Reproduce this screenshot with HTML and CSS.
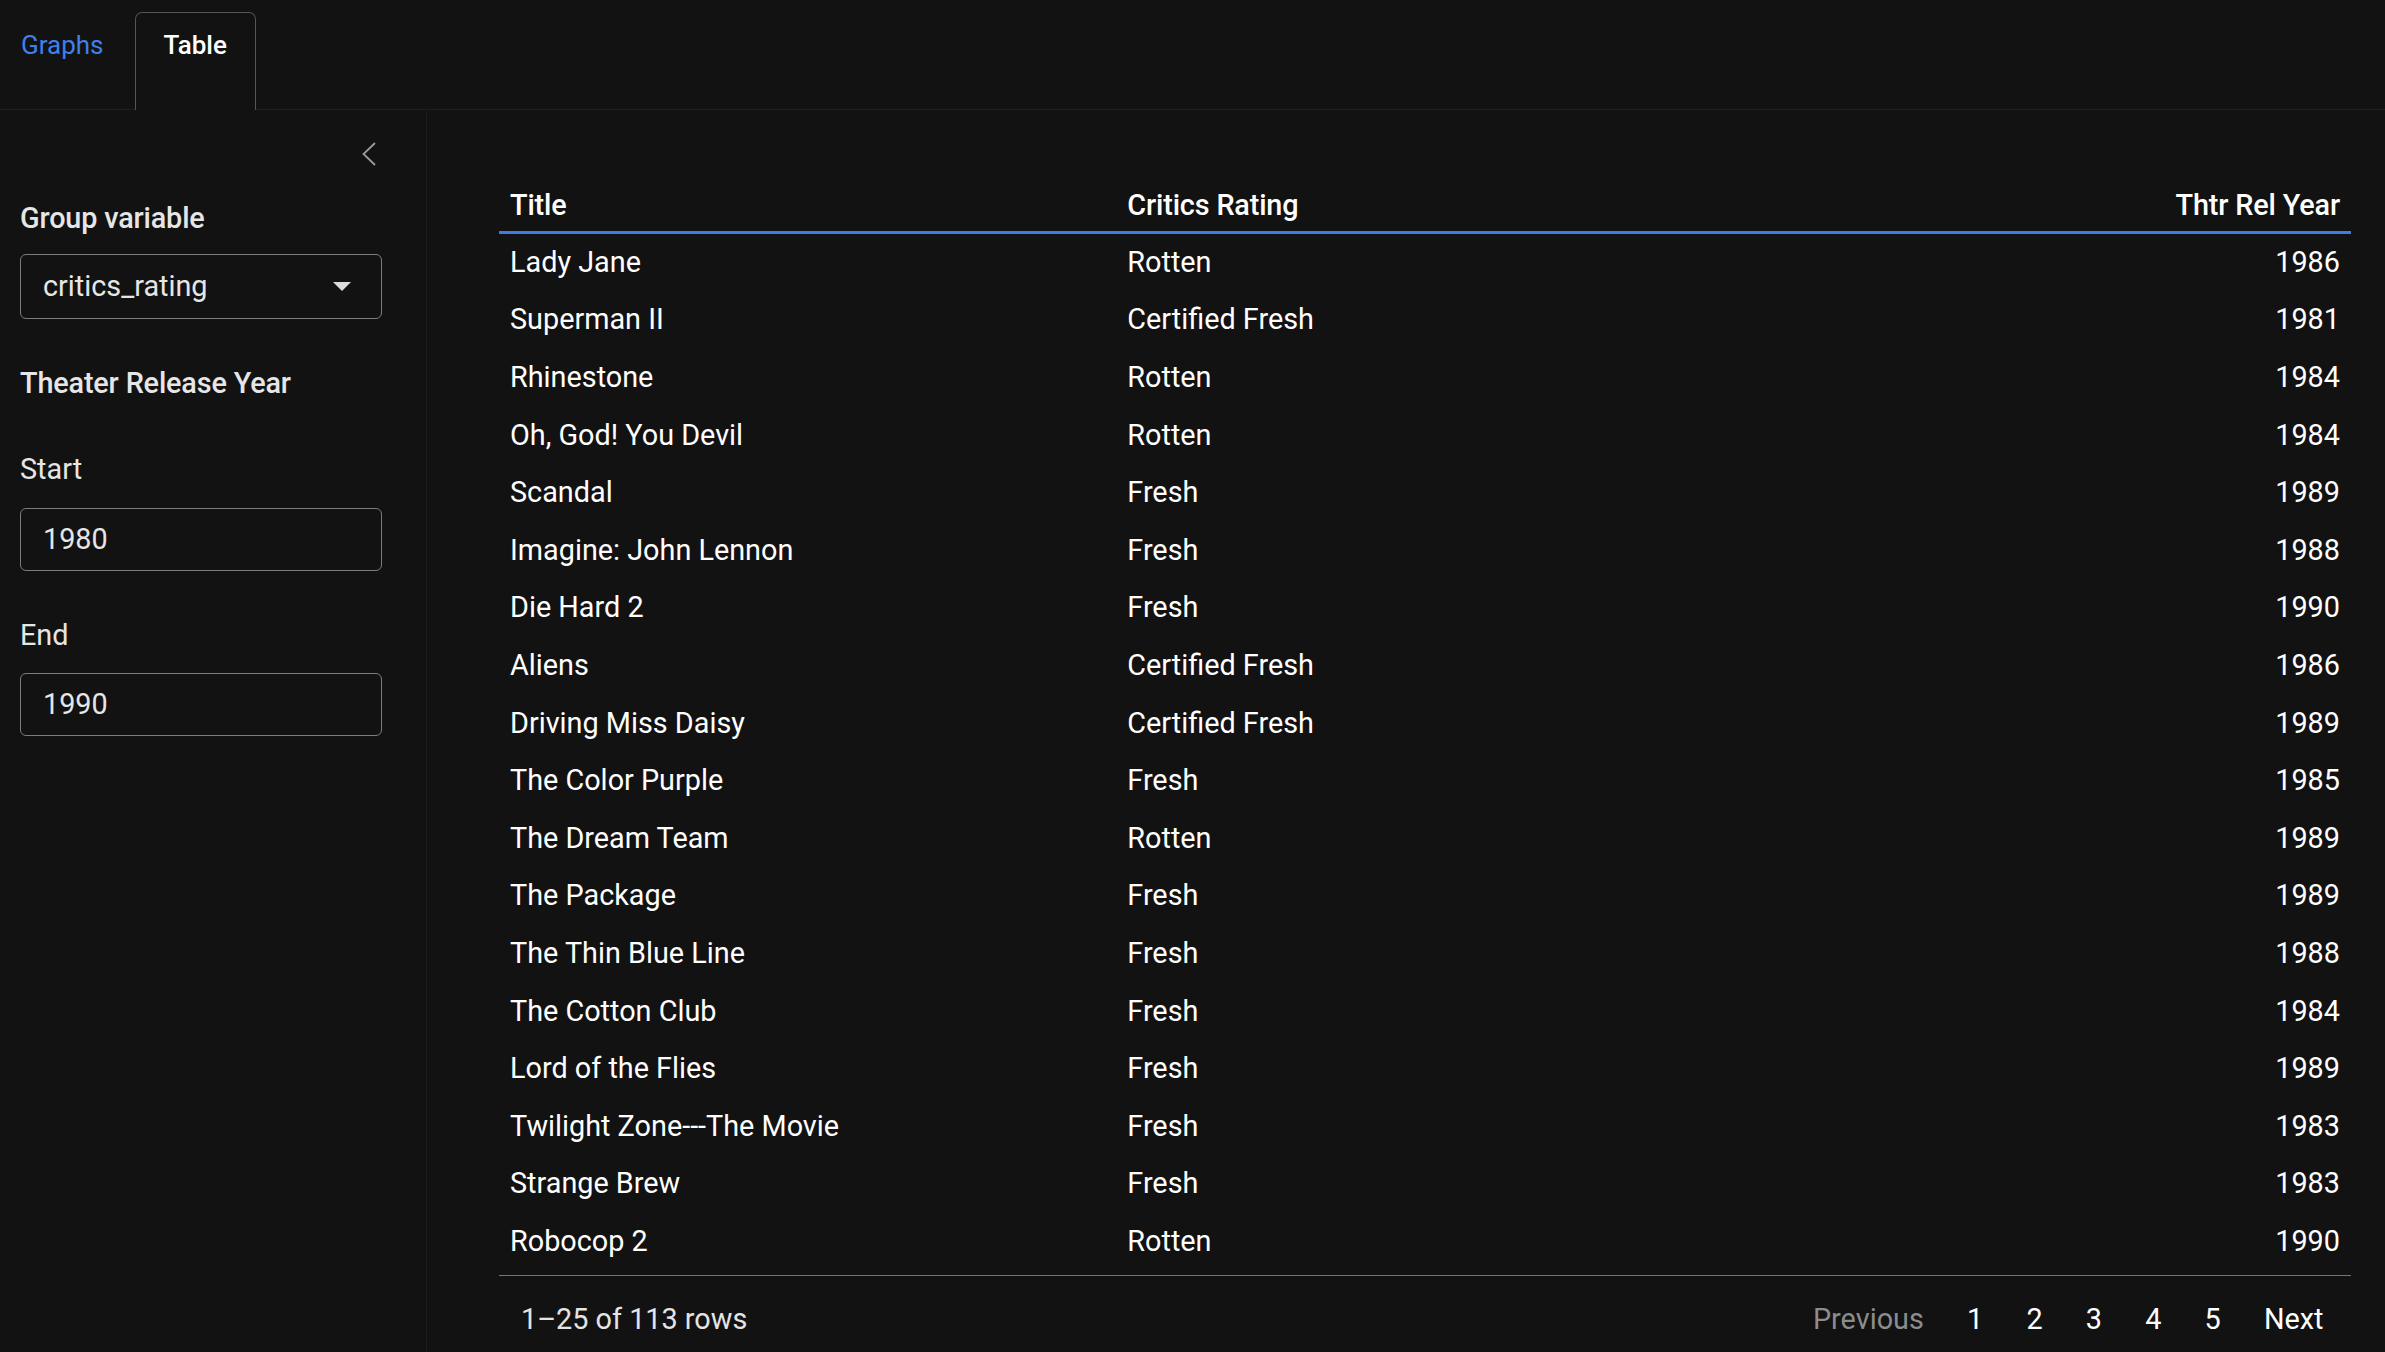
FILE: index.html
```html
<!DOCTYPE html>
<html lang="en">
<head>
<meta charset="utf-8">
<title>Movies</title>
<link rel="stylesheet" href="styles.css">
</head>
<body>
<div class="app">
  <nav class="tabs">
    <a class="tab tab-link">Graphs</a>
    <a class="tab tab-active">Table</a>
  </nav>
  <div class="layout">
    <aside class="sidebar">
      <div class="toggle-row">
        <svg class="chevron" width="14" height="24" viewBox="0 0 14 24"><path d="M13 1 L1.5 12 L13 23" fill="none" stroke="#9a9a9a" stroke-width="1.8"/></svg>
      </div>
      <div class="lbl lbl-strong lbl-first">Group variable</div>
      <div class="select">
        <span>critics_rating</span>
        <svg class="caret" width="18" height="9" viewBox="0 0 18 9"><path d="M0 0 H18 L9 9 Z" fill="#dcdcdc"/></svg>
      </div>
      <div class="lbl lbl-strong lbl-gap">Theater Release Year</div>
      <div class="lbl lbl-gap">Start</div>
      <div class="input">1980</div>
      <div class="lbl lbl-gap">End</div>
      <div class="input">1990</div>
    </aside>
    <main class="main">
      <div class="rt">
        <div class="rt-row rt-head">
          <div class="cell">Title</div>
          <div class="cell">Critics Rating</div>
          <div class="cell num">Thtr Rel Year</div>
        </div>
        <div class="rt-body">
          <div class="rt-row"><div class="cell">Lady Jane</div><div class="cell">Rotten</div><div class="cell num">1986</div></div>
          <div class="rt-row"><div class="cell">Superman II</div><div class="cell">Certified Fresh</div><div class="cell num">1981</div></div>
          <div class="rt-row"><div class="cell">Rhinestone</div><div class="cell">Rotten</div><div class="cell num">1984</div></div>
          <div class="rt-row"><div class="cell">Oh, God! You Devil</div><div class="cell">Rotten</div><div class="cell num">1984</div></div>
          <div class="rt-row"><div class="cell">Scandal</div><div class="cell">Fresh</div><div class="cell num">1989</div></div>
          <div class="rt-row"><div class="cell">Imagine: John Lennon</div><div class="cell">Fresh</div><div class="cell num">1988</div></div>
          <div class="rt-row"><div class="cell">Die Hard 2</div><div class="cell">Fresh</div><div class="cell num">1990</div></div>
          <div class="rt-row"><div class="cell">Aliens</div><div class="cell">Certified Fresh</div><div class="cell num">1986</div></div>
          <div class="rt-row"><div class="cell">Driving Miss Daisy</div><div class="cell">Certified Fresh</div><div class="cell num">1989</div></div>
          <div class="rt-row"><div class="cell">The Color Purple</div><div class="cell">Fresh</div><div class="cell num">1985</div></div>
          <div class="rt-row"><div class="cell">The Dream Team</div><div class="cell">Rotten</div><div class="cell num">1989</div></div>
          <div class="rt-row"><div class="cell">The Package</div><div class="cell">Fresh</div><div class="cell num">1989</div></div>
          <div class="rt-row"><div class="cell">The Thin Blue Line</div><div class="cell">Fresh</div><div class="cell num">1988</div></div>
          <div class="rt-row"><div class="cell">The Cotton Club</div><div class="cell">Fresh</div><div class="cell num">1984</div></div>
          <div class="rt-row"><div class="cell">Lord of the Flies</div><div class="cell">Fresh</div><div class="cell num">1989</div></div>
          <div class="rt-row"><div class="cell">Twilight Zone---The Movie</div><div class="cell">Fresh</div><div class="cell num">1983</div></div>
          <div class="rt-row"><div class="cell">Strange Brew</div><div class="cell">Fresh</div><div class="cell num">1983</div></div>
          <div class="rt-row"><div class="cell">Robocop 2</div><div class="cell">Rotten</div><div class="cell num">1990</div></div>
        </div>
        <div class="rt-foot">
          <div class="info">1–25 of 113 rows</div>
          <div class="pager">
            <span class="pbtn disabled">Previous</span>
            <span class="pbtn">1</span>
            <span class="pbtn">2</span>
            <span class="pbtn">3</span>
            <span class="pbtn">4</span>
            <span class="pbtn">5</span>
            <span class="pbtn">Next</span>
          </div>
        </div>
      </div>
    </main>
  </div>
</div>
</body>
</html>
```

FILE: styles.css
```css
* { box-sizing: border-box; }
html, body {
  margin: 0;
  padding: 0;
  background: #121212;
  color: #f2f2f2;
  font-family: Roboto, "Liberation Sans", sans-serif;
  font-size: 28.8px;
  line-height: 43.2px;
  height: 100%;
  overflow: hidden;
}
.app { height: 100vh; display: flex; flex-direction: column; }

.tabs {
  display: flex;
  padding-top: 12px;
  border-bottom: 1px solid #1f1f1f;
  height: 110px;
  flex: none;
}
.tab {
  display: block;
  height: 98px;
  border: 1px solid transparent;
  border-bottom: none;
  padding: 11px 28px 0;
  border-radius: 7px 7px 0 0;
  font-size: 26px;
}
.tab-link {
  color: #3f80ee;
  padding: 11px 30px 0 20px;
}
.tab-active {
  color: #ffffff;
  font-weight: 500;
  border-color: #555555;
  background: #121212;
  position: relative;
  z-index: 1;
}

.layout { flex: 1; display: flex; min-height: 0; margin-top: -1px; }
.sidebar {
  width: 427px;
  flex: none;
  border-right: 1px solid #1d1d1d;
  padding: 33px 44px 0 20px;
  display: flex;
  flex-direction: column;
}
.toggle-row { display: flex; justify-content: flex-end; height: 24px; padding-right: 6px; }
.chevron { display: block; }

.lbl { color: #e6e6e6; font-weight: 400; }
.lbl-strong { font-weight: 500; letter-spacing: -0.15px; }
.lbl-first { margin-top: 31px; }
.lbl-gap { margin-top: 43px; }

.select, .input {
  border: 1px solid #7c7c7c;
  border-radius: 6px;
  color: #e6e6e6;
  display: flex;
  align-items: center;
  padding: 0 22px;
}
.select {
  height: 65px;
  margin-top: 14px;
  justify-content: space-between;
  padding-right: 30px;
}
.input { height: 63px; margin-top: 16px; }
.caret { display: block; }

.main {
  flex: 1;
  min-width: 0;
  padding: 68px 34px 0 72px;
}
.rt-row {
  display: grid;
  grid-template-columns: 1fr 1fr 1fr;
  height: 57.6px;
}
.cell { padding: 7.2px 11px; color: #ffffff; white-space: nowrap; }
.num { text-align: right; }
.rt-head { border-bottom: 3px solid #3b7ce8; height: 56.6px; }
.rt-head .cell { font-weight: 500; letter-spacing: -0.15px; padding-bottom: 4.2px; padding-top: 7.2px; }
.rt-body {
  height: 1042px;
  overflow: hidden;
  border-bottom: 1px solid #3b7ce8;
}
.rt-foot {
  display: flex;
  justify-content: space-between;
  align-items: center;
  padding-top: 22.6px;
}
.info { padding-left: 22px; color: #e4e4e4; }
.pager { display: flex; margin-right: 6px; }
.pbtn { padding: 0 21.6px; color: #ffffff; }
.pbtn.disabled { color: #8c8c8c; }
```
